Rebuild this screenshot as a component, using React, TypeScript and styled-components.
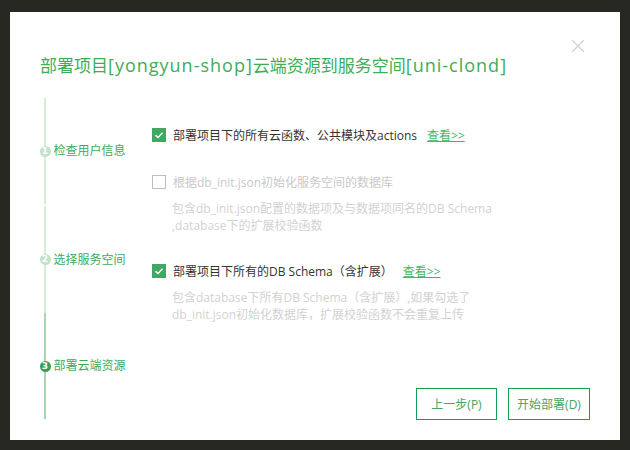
import React from "react";
import styled, { createGlobalStyle } from "styled-components";

const Global = createGlobalStyle`
  html, body { margin: 0; padding: 0; background: #272822; }
  body { width: 630px; height: 450px; overflow: hidden; }
  * { box-sizing: border-box; }
`;

const FONT = `"Open Sans", "Noto Sans CJK SC", sans-serif`;

const Backdrop = styled.div`
  padding: 12px 10px 10px 10px;
  width: 630px;
  height: 450px;
`;

const Dialog = styled.div`
  position: relative;
  width: 610px;
  height: 428px;
  background: #ffffff;
  padding: 41px 30px 20px 30px;
  display: flex;
  flex-direction: column;
  font-family: ${FONT};
`;

const Close = styled.button`
  position: absolute;
  top: 27px;
  right: 35px;
  width: 14px;
  height: 14px;
  padding: 0;
  border: none;
  background: transparent;
  cursor: pointer;
`;

const Title = styled.h1`
  margin: 0;
  font-size: 17px;
  line-height: 24px;
  font-weight: 400;
  color: #3dae57;
  white-space: nowrap;
`;

const Latin = styled.span`
  font-size: 18px;
  letter-spacing: 1px;
`;

const Body = styled.div`
  margin-top: 20px;
  height: 323px;
  display: flex;
`;

const Stepper = styled.div`
  width: 112px;
  display: flex;
  flex-direction: column;
`;

const Step = styled.div<{ $h: number; $line: string; $gap?: number }>`
  position: relative;
  height: ${(p) => p.$h}px;
  margin-bottom: ${(p) => p.$gap ?? 0}px;
  display: flex;
  align-items: center;
  gap: 3px;
  &::before {
    content: "";
    position: absolute;
    left: 4px;
    top: 0;
    bottom: 0;
    width: 2px;
    background: ${(p) => p.$line};
  }
`;

const Dot = styled.span<{ $bg: string }>`
  position: relative;
  z-index: 1;
  margin-left: -0.5px;
  width: 11px;
  height: 11px;
  border-radius: 50%;
  background: ${(p) => p.$bg};
  color: #ffffff;
  font-size: 9px;
  line-height: 11px;
  text-align: center;
  font-weight: 700;
  font-family: "DejaVu Sans", sans-serif;
`;

const StepLabel = styled.span`
  font-size: 12px;
  line-height: 16px;
  color: #40aa5b;
`;

const Content = styled.div`
  flex: 1;
  padding-top: 27px;
  display: flex;
  flex-direction: column;
`;

const Option = styled.label<{ $mt: number }>`
  margin-top: ${(p) => p.$mt}px;
  display: flex;
  align-items: center;
  height: 20px;
  font-size: 12px;
`;

const Box = styled.span<{ $checked: boolean }>`
  width: 14px;
  height: 14px;
  margin-right: 7px;
  display: inline-flex;
  align-items: center;
  justify-content: center;
  background: ${(p) => (p.$checked ? "#3fa862" : "#ffffff")};
  border: 1px solid ${(p) => (p.$checked ? "#3fa862" : "#bdbdbd")};
`;

const OptText = styled.span<{ $disabled?: boolean }>`
  color: ${(p) => (p.$disabled ? "#c9c9c9" : "#333333")};
  white-space: nowrap;
`;

const Link = styled.a<{ $ml: number }>`
  margin-left: ${(p) => p.$ml}px;
  color: #3ebb5c;
  text-decoration: underline;
  white-space: nowrap;
  cursor: pointer;
`;

const Desc = styled.p`
  margin: 8px 0 0 20px;
  font-size: 12px;
  line-height: 17px;
  color: #d2d2d2;
  white-space: nowrap;
`;

const Footer = styled.div`
  margin-top: auto;
  display: flex;
  justify-content: flex-end;
  gap: 11px;
`;

const Button = styled.button<{ $w: number }>`
  width: ${(p) => p.$w}px;
  height: 32px;
  background: #ffffff;
  border: 1px solid #14a04f;
  color: #48a462;
  font-family: ${FONT};
  font-size: 12px;
  padding: 0;
  cursor: pointer;
`;

const Check = () => (
  <svg width="10" height="10" viewBox="0 0 10 10">
    <path d="M1.5 5.2 L4 7.5 L8.5 2.8" fill="none" stroke="#ffffff" strokeWidth="1.5" />
  </svg>
);

export default function App() {
  return (
    <>
      <Global />
      <Backdrop>
        <Dialog>
          <Close aria-label="close">
            <svg width="14" height="14" viewBox="0 0 14 14">
              <path d="M1 1 L13 13 M13 1 L1 13" stroke="#cfcfcf" strokeWidth="1.1" />
            </svg>
          </Close>
          <Title>
            部署项目<Latin>[yongyun-shop]</Latin>云端资源到服务空间<Latin>[uni-clond]</Latin>
          </Title>
          <Body>
            <Stepper>
              <Step $h={106} $gap={2} $line="#d6ecdb">
                <Dot $bg="#c2e3c9">1</Dot>
                <StepLabel>检查用户信息</StepLabel>
              </Step>
              <Step $h={107} $line="#d6ecdb">
                <Dot $bg="#c2e3c9">2</Dot>
                <StepLabel>选择服务空间</StepLabel>
              </Step>
              <Step $h={106} $line="#a8d5b2">
                <Dot $bg="#3b9f54">3</Dot>
                <StepLabel>部署云端资源</StepLabel>
              </Step>
            </Stepper>
            <Content>
              <Option $mt={0}>
                <Box $checked>
                  <Check />
                </Box>
                <OptText>部署项目下的所有云函数、公共模块及actions</OptText>
                <Link $ml={10}>查看&gt;&gt;</Link>
              </Option>
              <Option $mt={27}>
                <Box $checked={false} />
                <OptText $disabled>根据db_init.json初始化服务空间的数据库</OptText>
              </Option>
              <Desc>
                包含db_init.json配置的数据项及与数据项同名的DB Schema
                <br />
                ,database下的扩展校验函数
              </Desc>
              <Option $mt={27}>
                <Box $checked>
                  <Check />
                </Box>
                <OptText>部署项目下所有的DB Schema（含扩展）</OptText>
                <Link $ml={10}>查看&gt;&gt;</Link>
              </Option>
              <Desc>
                包含database下所有DB Schema（含扩展）,如果勾选了
                <br />
                db_init.json初始化数据库，扩展校验函数不会重复上传
              </Desc>
              <Footer>
                <Button $w={81}>上一步(P)</Button>
                <Button $w={82}>开始部署(D)</Button>
              </Footer>
            </Content>
          </Body>
        </Dialog>
      </Backdrop>
    </>
  );
}
